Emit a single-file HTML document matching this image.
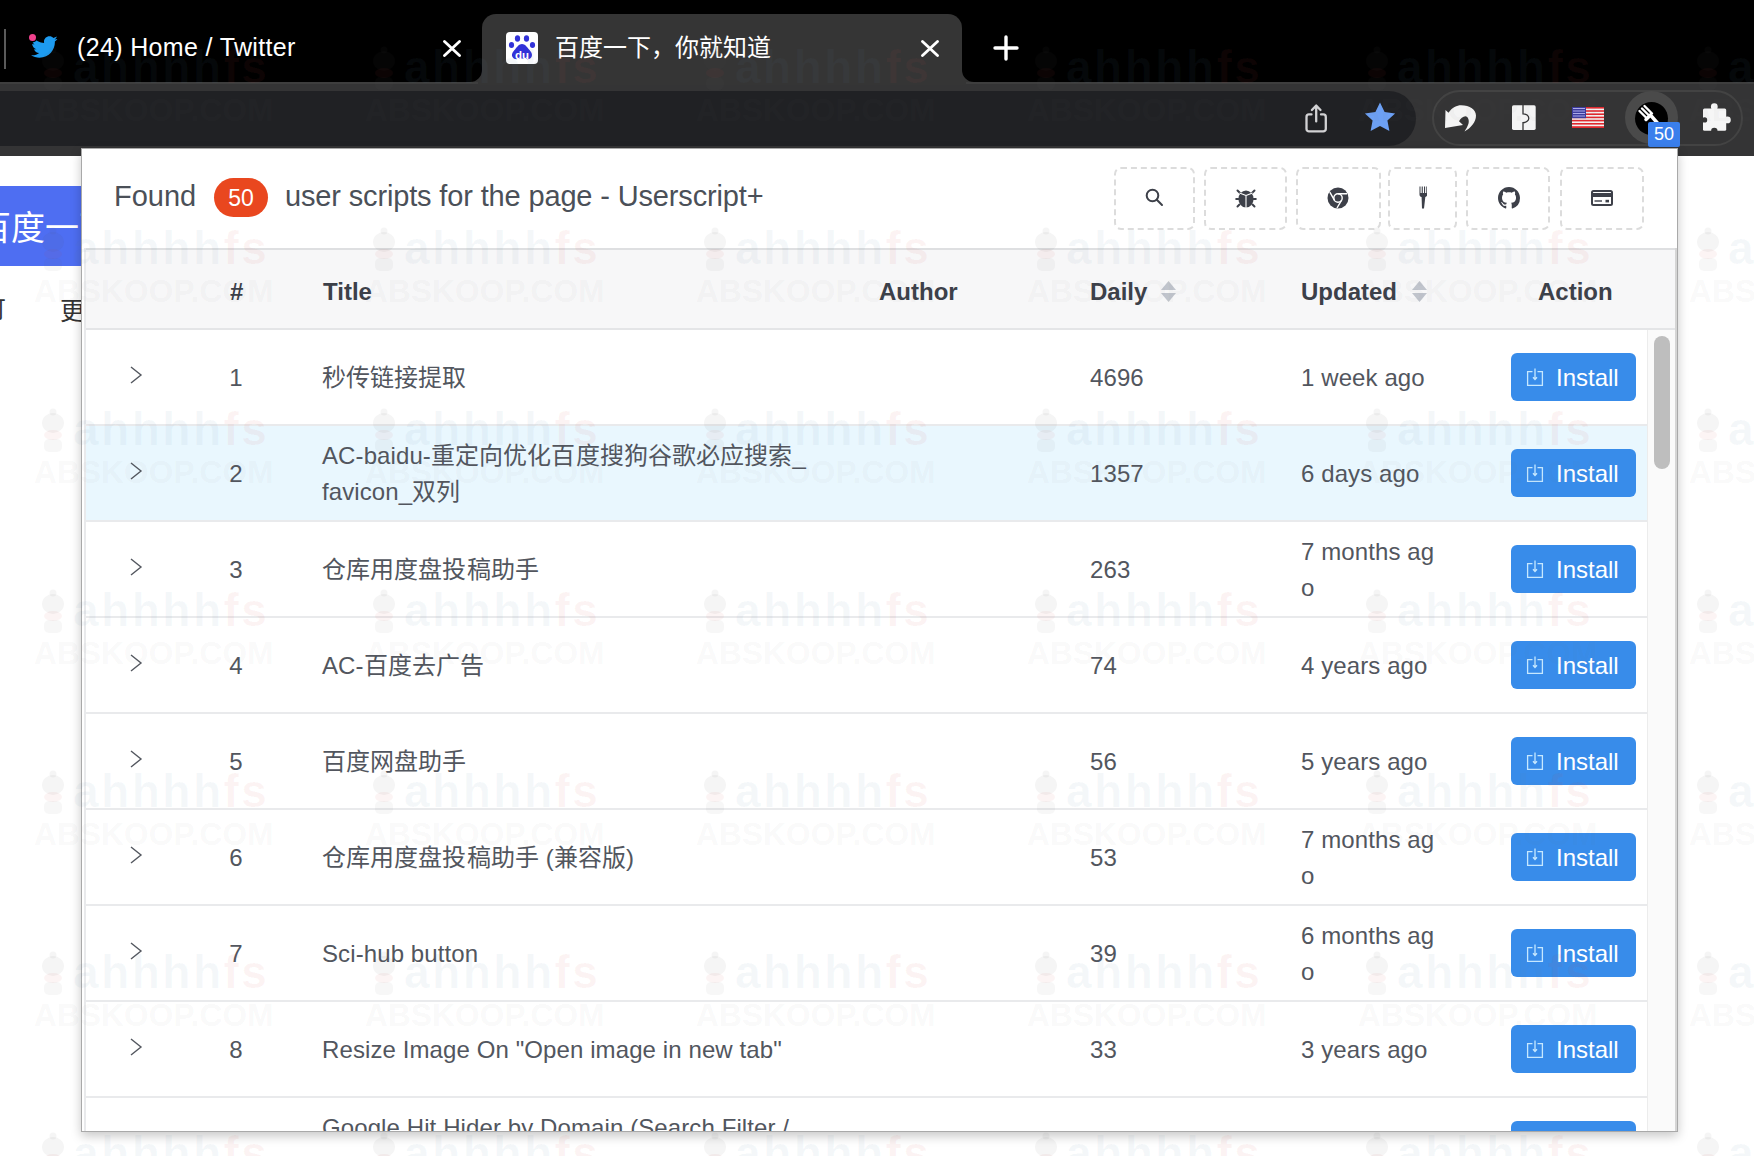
<!DOCTYPE html>
<html lang="zh-CN"><head><meta charset="utf-8">
<style>
*{box-sizing:border-box;margin:0;padding:0}
html,body{width:1754px;height:1156px;overflow:hidden;background:#fff;font-family:"Liberation Sans",sans-serif;position:relative}
.abs{position:absolute}
svg{display:block}
.tabtxt{position:absolute;color:#fff;font-size:25px;line-height:25px;white-space:nowrap;letter-spacing:0.35px}
.hdr{position:absolute;color:#4b5058;font-size:28px;line-height:28px;white-space:nowrap}
.ibtn{position:absolute;top:167px;height:63px;border:2px dashed #dcdcdc;border-radius:7px}
.ibtn svg{position:absolute}
.th{position:absolute;font-weight:bold;color:#3c4049;font-size:24px;line-height:24px;top:280px;white-space:nowrap}
.row{position:absolute;left:86px;width:1561px;height:96px;border-bottom:2px solid #e9eaec;background:#fff}
.td{position:absolute;color:#52565e;font-size:24px;line-height:36px;white-space:nowrap;letter-spacing:0.1px}
.btn{position:absolute;left:1425px;top:23px;width:125px;height:48px;background:#388cea;border-radius:6px}
.btn span{position:absolute;left:45px;top:13px;line-height:24px;color:#fff;font-size:24px}
.btn svg{position:absolute;left:15px;top:15px}
.sort{position:absolute;top:281px}
.wm{position:absolute;white-space:nowrap;pointer-events:none}
</style></head><body>
<div class="abs" style="left:0;top:0;width:1754px;height:82px;background:#000"></div>
<div class="abs" style="left:4px;top:29px;width:2px;height:40px;background:#5a5a5a"></div>
<svg class="abs" style="left:29.6px;top:32.5px" width="28" height="28" viewBox="0 0 24 24"><path fill="#1d9bf0" d="M23.643 4.937c-.835.37-1.732.62-2.675.733.962-.576 1.7-1.49 2.048-2.578-.9.534-1.897.922-2.958 1.13-.85-.904-2.06-1.470-3.400-1.470-2.572 0-4.658 2.086-4.658 4.660 0 .364.042.718.12 1.060-3.873-.195-7.304-2.050-9.602-4.868-.4.690-.63 1.490-.63 2.342 0 1.616.823 3.043 2.072 3.878-.764-.025-1.482-.234-2.110-.583v.060c0 2.257 1.605 4.140 3.737 4.568-.392.106-.803.162-1.227.162-.3 0-.593-.028-.877-.082.593 1.850 2.313 3.198 4.352 3.234-1.595 1.250-3.604 1.995-5.786 1.995-.376 0-.747-.022-1.112-.065 2.062 1.323 4.510 2.093 7.140 2.093 8.570 0 13.255-7.098 13.255-13.254 0-.2-.005-.402-.014-.602.910-.658 1.700-1.477 2.323-2.410z"/></svg>
<div class="abs" style="left:29px;top:33.5px;width:7px;height:7px;border-radius:50%;background:#f0418c;box-shadow:0 0 0 1.5px #000"></div>
<div class="tabtxt" style="left:77px;top:35px">(24) Home / Twitter</div>
<svg class="abs" style="left:443px;top:40px" width="18" height="17" viewBox="0 0 18 17"><path d="M1.5 1.5L16.5 15.5M16.5 1.5L1.5 15.5" stroke="#fff" stroke-width="2.8" stroke-linecap="round"/></svg>
<div class="abs" style="left:482px;top:14px;width:480px;height:76px;background:#353535;border-radius:14px 14px 0 0"></div>
<svg class="abs" style="left:470px;top:70px" width="12" height="12" viewBox="0 0 12 12"><path d="M0 12 L12 12 L12 0 A12 12 0 0 1 0 12Z" fill="#353535"/></svg>
<svg class="abs" style="left:962px;top:70px" width="12" height="12" viewBox="0 0 12 12"><path d="M12 12 L0 12 L0 0 A12 12 0 0 0 12 12Z" fill="#353535"/></svg>
<div class="abs" style="left:506px;top:32px;width:32px;height:32px;background:#fff;border-radius:4px"></div>
<svg class="abs" style="left:506px;top:32px" width="32" height="32" viewBox="0 0 32 32">
<g fill="#3232d8"><ellipse cx="11.5" cy="6.5" rx="2.6" ry="3.2"/><ellipse cx="20.5" cy="6.5" rx="2.6" ry="3.2"/><ellipse cx="5.5" cy="13" rx="2.6" ry="3"/><ellipse cx="26.5" cy="13" rx="2.6" ry="3"/>
<path d="M16 12c-3 0-5 3-7 5.5-2 2.3-4 4.5-2.5 7.5 1.2 2.3 3.5 2.3 5.5 2 1.4-.2 2.6-.5 4-.5s2.6.3 4 .5c2 .3 4.3.3 5.5-2 1.5-3-.5-5.2-2.5-7.5C21 15 19 12 16 12z"/></g>
<text x="16" y="26.5" font-family="Liberation Sans" font-weight="bold" font-size="11.5" fill="#fff" text-anchor="middle">du</text>
</svg>
<div class="tabtxt" style="left:555px;top:35px;font-size:24px;letter-spacing:0;font-weight:500">百度一下，你就知道</div>
<svg class="abs" style="left:921px;top:40px" width="18" height="17" viewBox="0 0 18 17"><path d="M1.5 1.5L16.5 15.5M16.5 1.5L1.5 15.5" stroke="#fff" stroke-width="2.8" stroke-linecap="round"/></svg>
<svg class="abs" style="left:993px;top:35px" width="26" height="26" viewBox="0 0 26 26"><path d="M13 2V24M2 13H24" stroke="#fff" stroke-width="3.4" stroke-linecap="round"/></svg>

<div class="abs" style="left:0;top:82px;width:1754px;height:74px;background:#343435"></div>
<div class="abs" style="left:0;top:82px;width:1754px;height:2px;background:#3e3e3e"></div>
<div class="abs" style="left:478px;top:82px;width:488px;height:3px;background:#353535"></div>
<div class="abs" style="left:-40px;top:91px;width:1456px;height:55px;background:#202124;border-radius:28px"></div>
<div class="abs" style="left:1432px;top:90px;width:311px;height:56px;border:2px solid #434343;border-radius:28px"></div>

<svg class="abs" style="left:1303px;top:102px" width="28" height="32" viewBox="0 0 28 32" fill="none" stroke="#d2d2d4" stroke-width="2.3" stroke-linecap="round" stroke-linejoin="round"><path d="M8.500 12.400H6a2.500 2.500 0 0 0-2.500 2.500V26.900a2.500 2.500 0 0 0 2.500 2.500H20.300a2.500 2.500 0 0 0 2.500-2.500V14.900a2.500 2.500 0 0 0-2.500-2.500H18"/><path d="M13.200 19.400V3.600M8.900 8L13.200 3.600L17.500 8"/></svg>
<svg class="abs" style="left:1363px;top:101px" width="34" height="33" viewBox="0 0 34 33"><path fill="#6ca0f4" d="M17 1.5l4.6 9.6 10.5 1.3-7.7 7.2 2 10.4L17 24.9 7.6 30l2-10.4L1.9 12.4l10.5-1.3z"/></svg>
<svg class="abs" style="left:1440px;top:100px" width="40" height="35" viewBox="0 0 40 35"><path fill="#f4f4f4" d="M5.500 10L8.500 12.800C12 7.500 17 5.300 21 5.300C30 5.300 36 10 36 15.500C36 22 31 28 24.500 31.400C27.500 27 29.500 23 28.500 19.500C28 17 26.500 16.300 25.500 16.300C23 16.300 20.500 18.500 19 21.300L23 25L5 28Z"/></svg>
<svg class="abs" style="left:1510px;top:104px" width="28" height="28" viewBox="0 0 28 28"><rect x="2" y="1.300" width="23.700" height="24.600" rx="1.600" fill="#f4f4f4"/><path d="M13 1V9.800A5.800 4.400 0 0 1 13 18.600V26.500" fill="none" stroke="#343435" stroke-width="1.300"/></svg>
<svg class="abs" style="left:1572px;top:107px" width="32" height="21" viewBox="0 0 32 21">
<rect width="32" height="21" fill="#f2f2f2"/>
<g fill="#e0282e"><rect y="0" width="32" height="1.6"/><rect y="3.2" width="32" height="1.6"/><rect y="6.4" width="32" height="1.6"/><rect y="9.6" width="32" height="1.6"/><rect y="12.8" width="32" height="1.6"/><rect y="16" width="32" height="1.6"/><rect y="19.2" width="32" height="1.8"/></g>
<rect width="14" height="11.2" fill="#3c3b9e"/>
<g fill="#c8c8ff" opacity=".8"><rect x="1" y="1" width="12" height="1"/><rect x="1" y="3.5" width="12" height="1"/><rect x="1" y="6" width="12" height="1"/><rect x="1" y="8.5" width="12" height="1"/></g>
</svg>
<div class="abs" style="left:1625px;top:91px;width:53px;height:53px;border-radius:50%;background:#4a4a4a"></div>
<div class="abs" style="left:1635px;top:102px;width:33px;height:33px;border-radius:50%;background:#000"></div>
<svg class="abs" style="left:1635px;top:102px" width="33" height="33" viewBox="0 0 33 33" fill="none" stroke="#fff" stroke-width="2.4" stroke-linecap="round">
<path d="M7 6.5L14.5 14M4.5 9L12 16.5M9.5 4L17 11.5"/><path d="M11 17.5L15.5 13L25 24" stroke-width="3.5"/></svg>
<div class="abs" style="left:1648px;top:122px;width:32px;height:25px;background:#3a7fec;border-radius:2px;color:#fff;font-size:18px;line-height:25px;text-align:center">50</div>
<svg class="abs" style="left:1700px;top:100px" width="34" height="34" viewBox="0 0 34 34"><g fill="#f6f6f6"><rect x="3" y="8.600" width="23.200" height="22.200" rx="1.500"/><circle cx="14.300" cy="6.700" r="3.400"/><rect x="12" y="6.700" width="4.600" height="4"/><circle cx="27.400" cy="19.900" r="3.400"/><rect x="24" y="17.600" width="3.400" height="4.600"/></g><g fill="#343435"><circle cx="4.600" cy="19.900" r="2.600"/><circle cx="14.300" cy="31" r="3.200"/></g></svg>


<div class="abs" style="left:0;top:156px;width:1754px;height:1000px;background:#fff"></div>

<div class="abs" style="left:0;top:186px;width:84px;height:80px;background:#4e6ef2;overflow:hidden">
<div class="abs" style="left:-23px;top:22px;color:#fff;font-size:34px;line-height:40px;white-space:nowrap;font-weight:500">百度一下</div></div>
<div class="abs" style="left:-18px;top:296px;color:#333;font-size:24px;line-height:28px;white-space:nowrap">可</div>
<div class="abs" style="left:60px;top:297px;color:#333;font-size:25px;line-height:28px;white-space:nowrap">更</div>


<div class="abs" style="left:81px;top:148px;width:1597px;height:984px;background:#fff;border:1px solid #a9a9a9;box-shadow:0 4px 10px rgba(0,0,0,.22);overflow:hidden">
<div class="abs" style="left:-82px;top:-149px;width:1754px;height:1156px">
<div class="hdr" style="left:114px;top:182px;font-size:29px;letter-spacing:0px">Found</div>
<div class="abs" style="left:214px;top:178px;width:54px;height:39px;border-radius:20px;background:#e9471f;color:#fff;font-size:23px;line-height:41px;text-align:center">50</div>
<div class="hdr" style="left:285px;top:182px;font-size:29px;letter-spacing:-0.15px">user scripts for the page - Userscript+</div>
<div class="ibtn" style="left:1114px;width:81px"></div>
<div class="abs" style="left:1145px;top:188px"><svg width="20" height="20" viewBox="0 0 20 20" fill="none" stroke="#3d4049" stroke-width="2" stroke-linecap="round"><circle cx="7.5" cy="7.5" r="5.8"/><path d="M11.8 11.8L17 17"/></svg></div>
<div class="ibtn" style="left:1204px;width:83px"></div>
<div class="abs" style="left:1235px;top:187px"><svg width="22" height="22" viewBox="0 0 22 22"><g stroke="#3d4049" stroke-width="2" stroke-linecap="round"><path d="M5 6L2.500 3.500M17 6L19.500 3.500M3.500 12H1.200M18.500 12H20.800M4.500 17.500L2.500 19.500M17.500 17.500L19.500 19.500"/></g><ellipse cx="11" cy="12" rx="7.6" ry="8.6" fill="#3d4049"/><path d="M11 8.500V21M11 8.500L4.500 6M11 8.500L17.500 6" stroke="#fff" stroke-width="1.1" fill="none"/></svg></div>
<div class="ibtn" style="left:1296px;width:85px"></div>
<div class="abs" style="left:1327px;top:187px"><svg width="22" height="22" viewBox="0 0 22 22"><circle cx="11" cy="11" r="10.5" fill="#3d4049"/><circle cx="11" cy="11" r="4.2" fill="none" stroke="#fff" stroke-width="1.4"/><path d="M11 6.8H20.2M7.4 13.1L2.8 5.2M14.6 13.1L10 21" stroke="#fff" stroke-width="1.4"/></svg></div>
<div class="ibtn" style="left:1388px;width:69px"></div>
<div class="abs" style="left:1419px;top:186px"><svg width="8" height="23" viewBox="0 0 8 23"><path fill="#3d4049" d="M0.5 0.5h1v6.5h1.2v-6.5h1.1v6.5h1.2v-6.5h1.1v6.5h1.2v-6.5h1v8c0 1.3-.8 2.2-2 2.6L5 22.5H3L2.6 11.1C1.300 10.700 0.5 9.800 0.5 8.5z"/></svg></div>
<div class="ibtn" style="left:1466px;width:84px"></div>
<div class="abs" style="left:1498px;top:187px"><svg width="22" height="22" viewBox="0 0 16 16"><path fill="#3d4049" d="M8 0C3.58 0 0 3.58 0 8c0 3.54 2.29 6.53 5.47 7.59.4.07.55-.17.55-.38 0-.19-.01-.82-.01-1.49-2.01.37-2.53-.49-2.69-.94-.09-.23-.48-.94-.82-1.13-.28-.15-.68-.52-.01-.53.63-.01 1.08.58 1.23.82.72 1.21 1.87.87 2.33.66.07-.52.28-.87.51-1.07-1.78-.2-3.64-.89-3.64-3.95 0-.87.31-1.59.82-2.15-.08-.2-.36-1.02.08-2.12 0 0 .67-.21 2.2.82.64-.18 1.32-.27 2-.27.68 0 1.36.09 2 .27 1.53-1.04 2.2-.82 2.2-.82.44 1.1.16 1.92.08 2.12.51.56.82 1.27.82 2.15 0 3.07-1.87 3.75-3.65 3.95.29.25.54.73.54 1.48 0 1.07-.01 1.93-.01 2.2 0 .21.15.46.55.38A8.013 8.013 0 0016 8c0-4.42-3.58-8-8-8z"/></svg></div>
<div class="ibtn" style="left:1560px;width:84px"></div>
<div class="abs" style="left:1591px;top:190px"><svg width="22" height="16" viewBox="0 0 22 16"><rect x="1" y="1" width="20" height="14" rx="1.5" fill="none" stroke="#3d4049" stroke-width="2"/><rect x="1" y="3" width="20" height="4" fill="#3d4049"/><path d="M3.500 11H11" stroke="#3d4049" stroke-width="1.4"/><rect x="14.5" y="9.800" width="3.5" height="2.600" fill="#3d4049"/></svg></div>
<div class="abs" style="left:85px;top:248px;width:1592px;height:82px;background:#f7f7f8;border-top:2px solid #dedfe1;border-bottom:2px solid #e4e5e7"></div>
<div class="th" style="left:230px">#</div>
<div class="th" style="left:323px">Title</div>
<div class="th" style="left:879px">Author</div>
<div class="th" style="left:1090px">Daily</div>
<svg class="sort" style="left:1160px" width="17" height="22" viewBox="0 0 17 22"><path d="M8.5 0L16 9H1Z" fill="#c0c4cc"/><path d="M8.5 21L16 12H1Z" fill="#c0c4cc"/></svg>
<div class="th" style="left:1301px">Updated</div>
<svg class="sort" style="left:1411px" width="17" height="22" viewBox="0 0 17 22"><path d="M8.5 0L16 9H1Z" fill="#c0c4cc"/><path d="M8.5 21L16 12H1Z" fill="#c0c4cc"/></svg>
<div class="th" style="left:1538px">Action</div>
<div class="abs" style="left:85px;top:330px;width:1592px;height:802px;overflow:hidden">
<div class="abs" style="left:-85px;top:-330px;width:1754px;height:1156px">
<div class="row" style="top:330px;background:#fff">
<svg class="abs" style="left:43px;top:36px" width="14" height="18" viewBox="0 0 14 18"><path d="M2 1L12 9L2 17" fill="none" stroke="#53575f" stroke-width="1.4"/></svg>
<div class="td" style="left:120px;top:30px;width:60px;text-align:center">1</div>
<div class="td" style="left:236px;top:30.0px">秒传链接提取</div>
<div class="td" style="left:1004px;top:30.0px">4696</div>
<div class="td" style="left:1215px;top:30.0px">1 week ago</div>
<div class="btn"><svg width="18" height="18" viewBox="0 0 18 18" fill="none" stroke="#c6e8ff" stroke-width="1.3"><path d="M6.500 3.700H1.600V17.300H16.400V3.700H11.500"/><path d="M9 0.500V11.500M7 9.300L9 11.500L11 9.300"/></svg><span>Install</span></div>
</div>
<div class="row" style="top:426px;background:#e9f7fe">
<svg class="abs" style="left:43px;top:36px" width="14" height="18" viewBox="0 0 14 18"><path d="M2 1L12 9L2 17" fill="none" stroke="#53575f" stroke-width="1.4"/></svg>
<div class="td" style="left:120px;top:30px;width:60px;text-align:center">2</div>
<div class="td" style="left:236px;top:12.0px">AC-baidu-重定向优化百度搜狗谷歌必应搜索_<br>favicon_双列</div>
<div class="td" style="left:1004px;top:30.0px">1357</div>
<div class="td" style="left:1215px;top:30.0px">6 days ago</div>
<div class="btn"><svg width="18" height="18" viewBox="0 0 18 18" fill="none" stroke="#c6e8ff" stroke-width="1.3"><path d="M6.500 3.700H1.600V17.300H16.400V3.700H11.500"/><path d="M9 0.500V11.500M7 9.300L9 11.500L11 9.300"/></svg><span>Install</span></div>
</div>
<div class="row" style="top:522px;background:#fff">
<svg class="abs" style="left:43px;top:36px" width="14" height="18" viewBox="0 0 14 18"><path d="M2 1L12 9L2 17" fill="none" stroke="#53575f" stroke-width="1.4"/></svg>
<div class="td" style="left:120px;top:30px;width:60px;text-align:center">3</div>
<div class="td" style="left:236px;top:30.0px">仓库用度盘投稿助手</div>
<div class="td" style="left:1004px;top:30.0px">263</div>
<div class="td" style="left:1215px;top:12.0px">7 months ag<br>o</div>
<div class="btn"><svg width="18" height="18" viewBox="0 0 18 18" fill="none" stroke="#c6e8ff" stroke-width="1.3"><path d="M6.500 3.700H1.600V17.300H16.400V3.700H11.500"/><path d="M9 0.500V11.500M7 9.300L9 11.500L11 9.300"/></svg><span>Install</span></div>
</div>
<div class="row" style="top:618px;background:#fff">
<svg class="abs" style="left:43px;top:36px" width="14" height="18" viewBox="0 0 14 18"><path d="M2 1L12 9L2 17" fill="none" stroke="#53575f" stroke-width="1.4"/></svg>
<div class="td" style="left:120px;top:30px;width:60px;text-align:center">4</div>
<div class="td" style="left:236px;top:30.0px">AC-百度去广告</div>
<div class="td" style="left:1004px;top:30.0px">74</div>
<div class="td" style="left:1215px;top:30.0px">4 years ago</div>
<div class="btn"><svg width="18" height="18" viewBox="0 0 18 18" fill="none" stroke="#c6e8ff" stroke-width="1.3"><path d="M6.500 3.700H1.600V17.300H16.400V3.700H11.500"/><path d="M9 0.500V11.500M7 9.300L9 11.500L11 9.300"/></svg><span>Install</span></div>
</div>
<div class="row" style="top:714px;background:#fff">
<svg class="abs" style="left:43px;top:36px" width="14" height="18" viewBox="0 0 14 18"><path d="M2 1L12 9L2 17" fill="none" stroke="#53575f" stroke-width="1.4"/></svg>
<div class="td" style="left:120px;top:30px;width:60px;text-align:center">5</div>
<div class="td" style="left:236px;top:30.0px">百度网盘助手</div>
<div class="td" style="left:1004px;top:30.0px">56</div>
<div class="td" style="left:1215px;top:30.0px">5 years ago</div>
<div class="btn"><svg width="18" height="18" viewBox="0 0 18 18" fill="none" stroke="#c6e8ff" stroke-width="1.3"><path d="M6.500 3.700H1.600V17.300H16.400V3.700H11.500"/><path d="M9 0.500V11.500M7 9.300L9 11.500L11 9.300"/></svg><span>Install</span></div>
</div>
<div class="row" style="top:810px;background:#fff">
<svg class="abs" style="left:43px;top:36px" width="14" height="18" viewBox="0 0 14 18"><path d="M2 1L12 9L2 17" fill="none" stroke="#53575f" stroke-width="1.4"/></svg>
<div class="td" style="left:120px;top:30px;width:60px;text-align:center">6</div>
<div class="td" style="left:236px;top:30.0px">仓库用度盘投稿助手 (兼容版)</div>
<div class="td" style="left:1004px;top:30.0px">53</div>
<div class="td" style="left:1215px;top:12.0px">7 months ag<br>o</div>
<div class="btn"><svg width="18" height="18" viewBox="0 0 18 18" fill="none" stroke="#c6e8ff" stroke-width="1.3"><path d="M6.500 3.700H1.600V17.300H16.400V3.700H11.500"/><path d="M9 0.500V11.500M7 9.300L9 11.500L11 9.300"/></svg><span>Install</span></div>
</div>
<div class="row" style="top:906px;background:#fff">
<svg class="abs" style="left:43px;top:36px" width="14" height="18" viewBox="0 0 14 18"><path d="M2 1L12 9L2 17" fill="none" stroke="#53575f" stroke-width="1.4"/></svg>
<div class="td" style="left:120px;top:30px;width:60px;text-align:center">7</div>
<div class="td" style="left:236px;top:30.0px">Sci-hub button</div>
<div class="td" style="left:1004px;top:30.0px">39</div>
<div class="td" style="left:1215px;top:12.0px">6 months ag<br>o</div>
<div class="btn"><svg width="18" height="18" viewBox="0 0 18 18" fill="none" stroke="#c6e8ff" stroke-width="1.3"><path d="M6.500 3.700H1.600V17.300H16.400V3.700H11.500"/><path d="M9 0.500V11.500M7 9.300L9 11.500L11 9.300"/></svg><span>Install</span></div>
</div>
<div class="row" style="top:1002px;background:#fff">
<svg class="abs" style="left:43px;top:36px" width="14" height="18" viewBox="0 0 14 18"><path d="M2 1L12 9L2 17" fill="none" stroke="#53575f" stroke-width="1.4"/></svg>
<div class="td" style="left:120px;top:30px;width:60px;text-align:center">8</div>
<div class="td" style="left:236px;top:30.0px">Resize Image On &quot;Open image in new tab&quot;</div>
<div class="td" style="left:1004px;top:30.0px">33</div>
<div class="td" style="left:1215px;top:30.0px">3 years ago</div>
<div class="btn"><svg width="18" height="18" viewBox="0 0 18 18" fill="none" stroke="#c6e8ff" stroke-width="1.3"><path d="M6.500 3.700H1.600V17.300H16.400V3.700H11.500"/><path d="M9 0.500V11.500M7 9.300L9 11.500L11 9.300"/></svg><span>Install</span></div>
</div>
<div class="row" style="top:1098px;background:#fff">
<svg class="abs" style="left:43px;top:36px" width="14" height="18" viewBox="0 0 14 18"><path d="M2 1L12 9L2 17" fill="none" stroke="#53575f" stroke-width="1.4"/></svg>
<div class="td" style="left:120px;top:30px;width:60px;text-align:center">9</div>
<div class="td" style="left:236px;top:12.0px">Google Hit Hider by Domain (Search Filter /<br>Block Sites)</div>
<div class="td" style="left:1004px;top:30.0px">30</div>
<div class="td" style="left:1215px;top:30.0px">2 years ago</div>
<div class="btn"><svg width="18" height="18" viewBox="0 0 18 18" fill="none" stroke="#c6e8ff" stroke-width="1.3"><path d="M6.500 3.700H1.600V17.300H16.400V3.700H11.500"/><path d="M9 0.500V11.500M7 9.300L9 11.500L11 9.300"/></svg><span>Install</span></div>
</div>
</div></div>
<div class="abs" style="left:84px;top:248px;width:2px;height:884px;background:#e9eaec"></div>
<div class="abs" style="left:1647px;top:330px;width:29px;height:802px;background:#fafafa;border-left:1px solid #ececec"></div>
<div class="abs" style="left:1654px;top:336px;width:16px;height:133px;border-radius:8px;background:#bebebe"></div>
<div class="abs" style="left:1675px;top:248px;width:2px;height:884px;background:#d5d5d5"></div>
</div>
</div>
<div class="abs" style="left:0;top:0;width:1754px;height:1156px;overflow:hidden;pointer-events:none">
<div class="wm" style="left:-297px;top:-86.2px;font-weight:bold;font-size:31.5px;line-height:31.5px;color:rgba(110,110,110,0.055);letter-spacing:0.2px">ABSKOOP.COM</div>
<div class="wm" style="left:-258px;top:-137.2px;font-weight:bold;font-size:46px;line-height:46px;letter-spacing:2.5px;color:rgba(90,130,160,0.06)">ahhhh<span style="color:rgba(210,70,70,0.06)">fs</span></div>
<svg class="wm" style="left:-291px;top:-135.2px" width="26" height="45" viewBox="0 0 26 45"><circle cx="13" cy="4" r="3.5" fill="rgba(90,90,90,0.06)"/><ellipse cx="13" cy="15" rx="11" ry="10" fill="rgba(90,90,90,0.06)"/><ellipse cx="13" cy="27" rx="9" ry="5" fill="rgba(210,70,70,0.06)"/><rect x="4" y="31" width="18" height="13" rx="5" fill="rgba(90,90,90,0.05)"/></svg>
<div class="wm" style="left:34px;top:-86.2px;font-weight:bold;font-size:31.5px;line-height:31.5px;color:rgba(110,110,110,0.055);letter-spacing:0.2px">ABSKOOP.COM</div>
<div class="wm" style="left:73px;top:-137.2px;font-weight:bold;font-size:46px;line-height:46px;letter-spacing:2.5px;color:rgba(90,130,160,0.06)">ahhhh<span style="color:rgba(210,70,70,0.06)">fs</span></div>
<svg class="wm" style="left:40px;top:-135.2px" width="26" height="45" viewBox="0 0 26 45"><circle cx="13" cy="4" r="3.5" fill="rgba(90,90,90,0.06)"/><ellipse cx="13" cy="15" rx="11" ry="10" fill="rgba(90,90,90,0.06)"/><ellipse cx="13" cy="27" rx="9" ry="5" fill="rgba(210,70,70,0.06)"/><rect x="4" y="31" width="18" height="13" rx="5" fill="rgba(90,90,90,0.05)"/></svg>
<div class="wm" style="left:365px;top:-86.2px;font-weight:bold;font-size:31.5px;line-height:31.5px;color:rgba(110,110,110,0.055);letter-spacing:0.2px">ABSKOOP.COM</div>
<div class="wm" style="left:404px;top:-137.2px;font-weight:bold;font-size:46px;line-height:46px;letter-spacing:2.5px;color:rgba(90,130,160,0.06)">ahhhh<span style="color:rgba(210,70,70,0.06)">fs</span></div>
<svg class="wm" style="left:371px;top:-135.2px" width="26" height="45" viewBox="0 0 26 45"><circle cx="13" cy="4" r="3.5" fill="rgba(90,90,90,0.06)"/><ellipse cx="13" cy="15" rx="11" ry="10" fill="rgba(90,90,90,0.06)"/><ellipse cx="13" cy="27" rx="9" ry="5" fill="rgba(210,70,70,0.06)"/><rect x="4" y="31" width="18" height="13" rx="5" fill="rgba(90,90,90,0.05)"/></svg>
<div class="wm" style="left:696px;top:-86.2px;font-weight:bold;font-size:31.5px;line-height:31.5px;color:rgba(110,110,110,0.055);letter-spacing:0.2px">ABSKOOP.COM</div>
<div class="wm" style="left:735px;top:-137.2px;font-weight:bold;font-size:46px;line-height:46px;letter-spacing:2.5px;color:rgba(90,130,160,0.06)">ahhhh<span style="color:rgba(210,70,70,0.06)">fs</span></div>
<svg class="wm" style="left:702px;top:-135.2px" width="26" height="45" viewBox="0 0 26 45"><circle cx="13" cy="4" r="3.5" fill="rgba(90,90,90,0.06)"/><ellipse cx="13" cy="15" rx="11" ry="10" fill="rgba(90,90,90,0.06)"/><ellipse cx="13" cy="27" rx="9" ry="5" fill="rgba(210,70,70,0.06)"/><rect x="4" y="31" width="18" height="13" rx="5" fill="rgba(90,90,90,0.05)"/></svg>
<div class="wm" style="left:1027px;top:-86.2px;font-weight:bold;font-size:31.5px;line-height:31.5px;color:rgba(110,110,110,0.055);letter-spacing:0.2px">ABSKOOP.COM</div>
<div class="wm" style="left:1066px;top:-137.2px;font-weight:bold;font-size:46px;line-height:46px;letter-spacing:2.5px;color:rgba(90,130,160,0.06)">ahhhh<span style="color:rgba(210,70,70,0.06)">fs</span></div>
<svg class="wm" style="left:1033px;top:-135.2px" width="26" height="45" viewBox="0 0 26 45"><circle cx="13" cy="4" r="3.5" fill="rgba(90,90,90,0.06)"/><ellipse cx="13" cy="15" rx="11" ry="10" fill="rgba(90,90,90,0.06)"/><ellipse cx="13" cy="27" rx="9" ry="5" fill="rgba(210,70,70,0.06)"/><rect x="4" y="31" width="18" height="13" rx="5" fill="rgba(90,90,90,0.05)"/></svg>
<div class="wm" style="left:1358px;top:-86.2px;font-weight:bold;font-size:31.5px;line-height:31.5px;color:rgba(110,110,110,0.055);letter-spacing:0.2px">ABSKOOP.COM</div>
<div class="wm" style="left:1397px;top:-137.2px;font-weight:bold;font-size:46px;line-height:46px;letter-spacing:2.5px;color:rgba(90,130,160,0.06)">ahhhh<span style="color:rgba(210,70,70,0.06)">fs</span></div>
<svg class="wm" style="left:1364px;top:-135.2px" width="26" height="45" viewBox="0 0 26 45"><circle cx="13" cy="4" r="3.5" fill="rgba(90,90,90,0.06)"/><ellipse cx="13" cy="15" rx="11" ry="10" fill="rgba(90,90,90,0.06)"/><ellipse cx="13" cy="27" rx="9" ry="5" fill="rgba(210,70,70,0.06)"/><rect x="4" y="31" width="18" height="13" rx="5" fill="rgba(90,90,90,0.05)"/></svg>
<div class="wm" style="left:1689px;top:-86.2px;font-weight:bold;font-size:31.5px;line-height:31.5px;color:rgba(110,110,110,0.055);letter-spacing:0.2px">ABSKOOP.COM</div>
<div class="wm" style="left:1728px;top:-137.2px;font-weight:bold;font-size:46px;line-height:46px;letter-spacing:2.5px;color:rgba(90,130,160,0.06)">ahhhh<span style="color:rgba(210,70,70,0.06)">fs</span></div>
<svg class="wm" style="left:1695px;top:-135.2px" width="26" height="45" viewBox="0 0 26 45"><circle cx="13" cy="4" r="3.5" fill="rgba(90,90,90,0.06)"/><ellipse cx="13" cy="15" rx="11" ry="10" fill="rgba(90,90,90,0.06)"/><ellipse cx="13" cy="27" rx="9" ry="5" fill="rgba(210,70,70,0.06)"/><rect x="4" y="31" width="18" height="13" rx="5" fill="rgba(90,90,90,0.05)"/></svg>
<div class="wm" style="left:-297px;top:94.8px;font-weight:bold;font-size:31.5px;line-height:31.5px;color:rgba(110,110,110,0.055);letter-spacing:0.2px">ABSKOOP.COM</div>
<div class="wm" style="left:-258px;top:43.8px;font-weight:bold;font-size:46px;line-height:46px;letter-spacing:2.5px;color:rgba(90,130,160,0.06)">ahhhh<span style="color:rgba(210,70,70,0.06)">fs</span></div>
<svg class="wm" style="left:-291px;top:45.8px" width="26" height="45" viewBox="0 0 26 45"><circle cx="13" cy="4" r="3.5" fill="rgba(90,90,90,0.06)"/><ellipse cx="13" cy="15" rx="11" ry="10" fill="rgba(90,90,90,0.06)"/><ellipse cx="13" cy="27" rx="9" ry="5" fill="rgba(210,70,70,0.06)"/><rect x="4" y="31" width="18" height="13" rx="5" fill="rgba(90,90,90,0.05)"/></svg>
<div class="wm" style="left:34px;top:94.8px;font-weight:bold;font-size:31.5px;line-height:31.5px;color:rgba(110,110,110,0.055);letter-spacing:0.2px">ABSKOOP.COM</div>
<div class="wm" style="left:73px;top:43.8px;font-weight:bold;font-size:46px;line-height:46px;letter-spacing:2.5px;color:rgba(90,130,160,0.06)">ahhhh<span style="color:rgba(210,70,70,0.06)">fs</span></div>
<svg class="wm" style="left:40px;top:45.8px" width="26" height="45" viewBox="0 0 26 45"><circle cx="13" cy="4" r="3.5" fill="rgba(90,90,90,0.06)"/><ellipse cx="13" cy="15" rx="11" ry="10" fill="rgba(90,90,90,0.06)"/><ellipse cx="13" cy="27" rx="9" ry="5" fill="rgba(210,70,70,0.06)"/><rect x="4" y="31" width="18" height="13" rx="5" fill="rgba(90,90,90,0.05)"/></svg>
<div class="wm" style="left:365px;top:94.8px;font-weight:bold;font-size:31.5px;line-height:31.5px;color:rgba(110,110,110,0.055);letter-spacing:0.2px">ABSKOOP.COM</div>
<div class="wm" style="left:404px;top:43.8px;font-weight:bold;font-size:46px;line-height:46px;letter-spacing:2.5px;color:rgba(90,130,160,0.06)">ahhhh<span style="color:rgba(210,70,70,0.06)">fs</span></div>
<svg class="wm" style="left:371px;top:45.8px" width="26" height="45" viewBox="0 0 26 45"><circle cx="13" cy="4" r="3.5" fill="rgba(90,90,90,0.06)"/><ellipse cx="13" cy="15" rx="11" ry="10" fill="rgba(90,90,90,0.06)"/><ellipse cx="13" cy="27" rx="9" ry="5" fill="rgba(210,70,70,0.06)"/><rect x="4" y="31" width="18" height="13" rx="5" fill="rgba(90,90,90,0.05)"/></svg>
<div class="wm" style="left:696px;top:94.8px;font-weight:bold;font-size:31.5px;line-height:31.5px;color:rgba(110,110,110,0.055);letter-spacing:0.2px">ABSKOOP.COM</div>
<div class="wm" style="left:735px;top:43.8px;font-weight:bold;font-size:46px;line-height:46px;letter-spacing:2.5px;color:rgba(90,130,160,0.06)">ahhhh<span style="color:rgba(210,70,70,0.06)">fs</span></div>
<svg class="wm" style="left:702px;top:45.8px" width="26" height="45" viewBox="0 0 26 45"><circle cx="13" cy="4" r="3.5" fill="rgba(90,90,90,0.06)"/><ellipse cx="13" cy="15" rx="11" ry="10" fill="rgba(90,90,90,0.06)"/><ellipse cx="13" cy="27" rx="9" ry="5" fill="rgba(210,70,70,0.06)"/><rect x="4" y="31" width="18" height="13" rx="5" fill="rgba(90,90,90,0.05)"/></svg>
<div class="wm" style="left:1027px;top:94.8px;font-weight:bold;font-size:31.5px;line-height:31.5px;color:rgba(110,110,110,0.055);letter-spacing:0.2px">ABSKOOP.COM</div>
<div class="wm" style="left:1066px;top:43.8px;font-weight:bold;font-size:46px;line-height:46px;letter-spacing:2.5px;color:rgba(90,130,160,0.06)">ahhhh<span style="color:rgba(210,70,70,0.06)">fs</span></div>
<svg class="wm" style="left:1033px;top:45.8px" width="26" height="45" viewBox="0 0 26 45"><circle cx="13" cy="4" r="3.5" fill="rgba(90,90,90,0.06)"/><ellipse cx="13" cy="15" rx="11" ry="10" fill="rgba(90,90,90,0.06)"/><ellipse cx="13" cy="27" rx="9" ry="5" fill="rgba(210,70,70,0.06)"/><rect x="4" y="31" width="18" height="13" rx="5" fill="rgba(90,90,90,0.05)"/></svg>
<div class="wm" style="left:1358px;top:94.8px;font-weight:bold;font-size:31.5px;line-height:31.5px;color:rgba(110,110,110,0.055);letter-spacing:0.2px">ABSKOOP.COM</div>
<div class="wm" style="left:1397px;top:43.8px;font-weight:bold;font-size:46px;line-height:46px;letter-spacing:2.5px;color:rgba(90,130,160,0.06)">ahhhh<span style="color:rgba(210,70,70,0.06)">fs</span></div>
<svg class="wm" style="left:1364px;top:45.8px" width="26" height="45" viewBox="0 0 26 45"><circle cx="13" cy="4" r="3.5" fill="rgba(90,90,90,0.06)"/><ellipse cx="13" cy="15" rx="11" ry="10" fill="rgba(90,90,90,0.06)"/><ellipse cx="13" cy="27" rx="9" ry="5" fill="rgba(210,70,70,0.06)"/><rect x="4" y="31" width="18" height="13" rx="5" fill="rgba(90,90,90,0.05)"/></svg>
<div class="wm" style="left:1689px;top:94.8px;font-weight:bold;font-size:31.5px;line-height:31.5px;color:rgba(110,110,110,0.055);letter-spacing:0.2px">ABSKOOP.COM</div>
<div class="wm" style="left:1728px;top:43.8px;font-weight:bold;font-size:46px;line-height:46px;letter-spacing:2.5px;color:rgba(90,130,160,0.06)">ahhhh<span style="color:rgba(210,70,70,0.06)">fs</span></div>
<svg class="wm" style="left:1695px;top:45.8px" width="26" height="45" viewBox="0 0 26 45"><circle cx="13" cy="4" r="3.5" fill="rgba(90,90,90,0.06)"/><ellipse cx="13" cy="15" rx="11" ry="10" fill="rgba(90,90,90,0.06)"/><ellipse cx="13" cy="27" rx="9" ry="5" fill="rgba(210,70,70,0.06)"/><rect x="4" y="31" width="18" height="13" rx="5" fill="rgba(90,90,90,0.05)"/></svg>
<div class="wm" style="left:-297px;top:275.8px;font-weight:bold;font-size:31.5px;line-height:31.5px;color:rgba(110,110,110,0.055);letter-spacing:0.2px">ABSKOOP.COM</div>
<div class="wm" style="left:-258px;top:224.8px;font-weight:bold;font-size:46px;line-height:46px;letter-spacing:2.5px;color:rgba(90,130,160,0.06)">ahhhh<span style="color:rgba(210,70,70,0.06)">fs</span></div>
<svg class="wm" style="left:-291px;top:226.8px" width="26" height="45" viewBox="0 0 26 45"><circle cx="13" cy="4" r="3.5" fill="rgba(90,90,90,0.06)"/><ellipse cx="13" cy="15" rx="11" ry="10" fill="rgba(90,90,90,0.06)"/><ellipse cx="13" cy="27" rx="9" ry="5" fill="rgba(210,70,70,0.06)"/><rect x="4" y="31" width="18" height="13" rx="5" fill="rgba(90,90,90,0.05)"/></svg>
<div class="wm" style="left:34px;top:275.8px;font-weight:bold;font-size:31.5px;line-height:31.5px;color:rgba(110,110,110,0.055);letter-spacing:0.2px">ABSKOOP.COM</div>
<div class="wm" style="left:73px;top:224.8px;font-weight:bold;font-size:46px;line-height:46px;letter-spacing:2.5px;color:rgba(90,130,160,0.06)">ahhhh<span style="color:rgba(210,70,70,0.06)">fs</span></div>
<svg class="wm" style="left:40px;top:226.8px" width="26" height="45" viewBox="0 0 26 45"><circle cx="13" cy="4" r="3.5" fill="rgba(90,90,90,0.06)"/><ellipse cx="13" cy="15" rx="11" ry="10" fill="rgba(90,90,90,0.06)"/><ellipse cx="13" cy="27" rx="9" ry="5" fill="rgba(210,70,70,0.06)"/><rect x="4" y="31" width="18" height="13" rx="5" fill="rgba(90,90,90,0.05)"/></svg>
<div class="wm" style="left:365px;top:275.8px;font-weight:bold;font-size:31.5px;line-height:31.5px;color:rgba(110,110,110,0.055);letter-spacing:0.2px">ABSKOOP.COM</div>
<div class="wm" style="left:404px;top:224.8px;font-weight:bold;font-size:46px;line-height:46px;letter-spacing:2.5px;color:rgba(90,130,160,0.06)">ahhhh<span style="color:rgba(210,70,70,0.06)">fs</span></div>
<svg class="wm" style="left:371px;top:226.8px" width="26" height="45" viewBox="0 0 26 45"><circle cx="13" cy="4" r="3.5" fill="rgba(90,90,90,0.06)"/><ellipse cx="13" cy="15" rx="11" ry="10" fill="rgba(90,90,90,0.06)"/><ellipse cx="13" cy="27" rx="9" ry="5" fill="rgba(210,70,70,0.06)"/><rect x="4" y="31" width="18" height="13" rx="5" fill="rgba(90,90,90,0.05)"/></svg>
<div class="wm" style="left:696px;top:275.8px;font-weight:bold;font-size:31.5px;line-height:31.5px;color:rgba(110,110,110,0.055);letter-spacing:0.2px">ABSKOOP.COM</div>
<div class="wm" style="left:735px;top:224.8px;font-weight:bold;font-size:46px;line-height:46px;letter-spacing:2.5px;color:rgba(90,130,160,0.06)">ahhhh<span style="color:rgba(210,70,70,0.06)">fs</span></div>
<svg class="wm" style="left:702px;top:226.8px" width="26" height="45" viewBox="0 0 26 45"><circle cx="13" cy="4" r="3.5" fill="rgba(90,90,90,0.06)"/><ellipse cx="13" cy="15" rx="11" ry="10" fill="rgba(90,90,90,0.06)"/><ellipse cx="13" cy="27" rx="9" ry="5" fill="rgba(210,70,70,0.06)"/><rect x="4" y="31" width="18" height="13" rx="5" fill="rgba(90,90,90,0.05)"/></svg>
<div class="wm" style="left:1027px;top:275.8px;font-weight:bold;font-size:31.5px;line-height:31.5px;color:rgba(110,110,110,0.055);letter-spacing:0.2px">ABSKOOP.COM</div>
<div class="wm" style="left:1066px;top:224.8px;font-weight:bold;font-size:46px;line-height:46px;letter-spacing:2.5px;color:rgba(90,130,160,0.06)">ahhhh<span style="color:rgba(210,70,70,0.06)">fs</span></div>
<svg class="wm" style="left:1033px;top:226.8px" width="26" height="45" viewBox="0 0 26 45"><circle cx="13" cy="4" r="3.5" fill="rgba(90,90,90,0.06)"/><ellipse cx="13" cy="15" rx="11" ry="10" fill="rgba(90,90,90,0.06)"/><ellipse cx="13" cy="27" rx="9" ry="5" fill="rgba(210,70,70,0.06)"/><rect x="4" y="31" width="18" height="13" rx="5" fill="rgba(90,90,90,0.05)"/></svg>
<div class="wm" style="left:1358px;top:275.8px;font-weight:bold;font-size:31.5px;line-height:31.5px;color:rgba(110,110,110,0.055);letter-spacing:0.2px">ABSKOOP.COM</div>
<div class="wm" style="left:1397px;top:224.8px;font-weight:bold;font-size:46px;line-height:46px;letter-spacing:2.5px;color:rgba(90,130,160,0.06)">ahhhh<span style="color:rgba(210,70,70,0.06)">fs</span></div>
<svg class="wm" style="left:1364px;top:226.8px" width="26" height="45" viewBox="0 0 26 45"><circle cx="13" cy="4" r="3.5" fill="rgba(90,90,90,0.06)"/><ellipse cx="13" cy="15" rx="11" ry="10" fill="rgba(90,90,90,0.06)"/><ellipse cx="13" cy="27" rx="9" ry="5" fill="rgba(210,70,70,0.06)"/><rect x="4" y="31" width="18" height="13" rx="5" fill="rgba(90,90,90,0.05)"/></svg>
<div class="wm" style="left:1689px;top:275.8px;font-weight:bold;font-size:31.5px;line-height:31.5px;color:rgba(110,110,110,0.055);letter-spacing:0.2px">ABSKOOP.COM</div>
<div class="wm" style="left:1728px;top:224.8px;font-weight:bold;font-size:46px;line-height:46px;letter-spacing:2.5px;color:rgba(90,130,160,0.06)">ahhhh<span style="color:rgba(210,70,70,0.06)">fs</span></div>
<svg class="wm" style="left:1695px;top:226.8px" width="26" height="45" viewBox="0 0 26 45"><circle cx="13" cy="4" r="3.5" fill="rgba(90,90,90,0.06)"/><ellipse cx="13" cy="15" rx="11" ry="10" fill="rgba(90,90,90,0.06)"/><ellipse cx="13" cy="27" rx="9" ry="5" fill="rgba(210,70,70,0.06)"/><rect x="4" y="31" width="18" height="13" rx="5" fill="rgba(90,90,90,0.05)"/></svg>
<div class="wm" style="left:-297px;top:456.8px;font-weight:bold;font-size:31.5px;line-height:31.5px;color:rgba(110,110,110,0.055);letter-spacing:0.2px">ABSKOOP.COM</div>
<div class="wm" style="left:-258px;top:405.8px;font-weight:bold;font-size:46px;line-height:46px;letter-spacing:2.5px;color:rgba(90,130,160,0.06)">ahhhh<span style="color:rgba(210,70,70,0.06)">fs</span></div>
<svg class="wm" style="left:-291px;top:407.8px" width="26" height="45" viewBox="0 0 26 45"><circle cx="13" cy="4" r="3.5" fill="rgba(90,90,90,0.06)"/><ellipse cx="13" cy="15" rx="11" ry="10" fill="rgba(90,90,90,0.06)"/><ellipse cx="13" cy="27" rx="9" ry="5" fill="rgba(210,70,70,0.06)"/><rect x="4" y="31" width="18" height="13" rx="5" fill="rgba(90,90,90,0.05)"/></svg>
<div class="wm" style="left:34px;top:456.8px;font-weight:bold;font-size:31.5px;line-height:31.5px;color:rgba(110,110,110,0.055);letter-spacing:0.2px">ABSKOOP.COM</div>
<div class="wm" style="left:73px;top:405.8px;font-weight:bold;font-size:46px;line-height:46px;letter-spacing:2.5px;color:rgba(90,130,160,0.06)">ahhhh<span style="color:rgba(210,70,70,0.06)">fs</span></div>
<svg class="wm" style="left:40px;top:407.8px" width="26" height="45" viewBox="0 0 26 45"><circle cx="13" cy="4" r="3.5" fill="rgba(90,90,90,0.06)"/><ellipse cx="13" cy="15" rx="11" ry="10" fill="rgba(90,90,90,0.06)"/><ellipse cx="13" cy="27" rx="9" ry="5" fill="rgba(210,70,70,0.06)"/><rect x="4" y="31" width="18" height="13" rx="5" fill="rgba(90,90,90,0.05)"/></svg>
<div class="wm" style="left:365px;top:456.8px;font-weight:bold;font-size:31.5px;line-height:31.5px;color:rgba(110,110,110,0.055);letter-spacing:0.2px">ABSKOOP.COM</div>
<div class="wm" style="left:404px;top:405.8px;font-weight:bold;font-size:46px;line-height:46px;letter-spacing:2.5px;color:rgba(90,130,160,0.06)">ahhhh<span style="color:rgba(210,70,70,0.06)">fs</span></div>
<svg class="wm" style="left:371px;top:407.8px" width="26" height="45" viewBox="0 0 26 45"><circle cx="13" cy="4" r="3.5" fill="rgba(90,90,90,0.06)"/><ellipse cx="13" cy="15" rx="11" ry="10" fill="rgba(90,90,90,0.06)"/><ellipse cx="13" cy="27" rx="9" ry="5" fill="rgba(210,70,70,0.06)"/><rect x="4" y="31" width="18" height="13" rx="5" fill="rgba(90,90,90,0.05)"/></svg>
<div class="wm" style="left:696px;top:456.8px;font-weight:bold;font-size:31.5px;line-height:31.5px;color:rgba(110,110,110,0.055);letter-spacing:0.2px">ABSKOOP.COM</div>
<div class="wm" style="left:735px;top:405.8px;font-weight:bold;font-size:46px;line-height:46px;letter-spacing:2.5px;color:rgba(90,130,160,0.06)">ahhhh<span style="color:rgba(210,70,70,0.06)">fs</span></div>
<svg class="wm" style="left:702px;top:407.8px" width="26" height="45" viewBox="0 0 26 45"><circle cx="13" cy="4" r="3.5" fill="rgba(90,90,90,0.06)"/><ellipse cx="13" cy="15" rx="11" ry="10" fill="rgba(90,90,90,0.06)"/><ellipse cx="13" cy="27" rx="9" ry="5" fill="rgba(210,70,70,0.06)"/><rect x="4" y="31" width="18" height="13" rx="5" fill="rgba(90,90,90,0.05)"/></svg>
<div class="wm" style="left:1027px;top:456.8px;font-weight:bold;font-size:31.5px;line-height:31.5px;color:rgba(110,110,110,0.055);letter-spacing:0.2px">ABSKOOP.COM</div>
<div class="wm" style="left:1066px;top:405.8px;font-weight:bold;font-size:46px;line-height:46px;letter-spacing:2.5px;color:rgba(90,130,160,0.06)">ahhhh<span style="color:rgba(210,70,70,0.06)">fs</span></div>
<svg class="wm" style="left:1033px;top:407.8px" width="26" height="45" viewBox="0 0 26 45"><circle cx="13" cy="4" r="3.5" fill="rgba(90,90,90,0.06)"/><ellipse cx="13" cy="15" rx="11" ry="10" fill="rgba(90,90,90,0.06)"/><ellipse cx="13" cy="27" rx="9" ry="5" fill="rgba(210,70,70,0.06)"/><rect x="4" y="31" width="18" height="13" rx="5" fill="rgba(90,90,90,0.05)"/></svg>
<div class="wm" style="left:1358px;top:456.8px;font-weight:bold;font-size:31.5px;line-height:31.5px;color:rgba(110,110,110,0.055);letter-spacing:0.2px">ABSKOOP.COM</div>
<div class="wm" style="left:1397px;top:405.8px;font-weight:bold;font-size:46px;line-height:46px;letter-spacing:2.5px;color:rgba(90,130,160,0.06)">ahhhh<span style="color:rgba(210,70,70,0.06)">fs</span></div>
<svg class="wm" style="left:1364px;top:407.8px" width="26" height="45" viewBox="0 0 26 45"><circle cx="13" cy="4" r="3.5" fill="rgba(90,90,90,0.06)"/><ellipse cx="13" cy="15" rx="11" ry="10" fill="rgba(90,90,90,0.06)"/><ellipse cx="13" cy="27" rx="9" ry="5" fill="rgba(210,70,70,0.06)"/><rect x="4" y="31" width="18" height="13" rx="5" fill="rgba(90,90,90,0.05)"/></svg>
<div class="wm" style="left:1689px;top:456.8px;font-weight:bold;font-size:31.5px;line-height:31.5px;color:rgba(110,110,110,0.055);letter-spacing:0.2px">ABSKOOP.COM</div>
<div class="wm" style="left:1728px;top:405.8px;font-weight:bold;font-size:46px;line-height:46px;letter-spacing:2.5px;color:rgba(90,130,160,0.06)">ahhhh<span style="color:rgba(210,70,70,0.06)">fs</span></div>
<svg class="wm" style="left:1695px;top:407.8px" width="26" height="45" viewBox="0 0 26 45"><circle cx="13" cy="4" r="3.5" fill="rgba(90,90,90,0.06)"/><ellipse cx="13" cy="15" rx="11" ry="10" fill="rgba(90,90,90,0.06)"/><ellipse cx="13" cy="27" rx="9" ry="5" fill="rgba(210,70,70,0.06)"/><rect x="4" y="31" width="18" height="13" rx="5" fill="rgba(90,90,90,0.05)"/></svg>
<div class="wm" style="left:-297px;top:637.8px;font-weight:bold;font-size:31.5px;line-height:31.5px;color:rgba(110,110,110,0.055);letter-spacing:0.2px">ABSKOOP.COM</div>
<div class="wm" style="left:-258px;top:586.8px;font-weight:bold;font-size:46px;line-height:46px;letter-spacing:2.5px;color:rgba(90,130,160,0.06)">ahhhh<span style="color:rgba(210,70,70,0.06)">fs</span></div>
<svg class="wm" style="left:-291px;top:588.8px" width="26" height="45" viewBox="0 0 26 45"><circle cx="13" cy="4" r="3.5" fill="rgba(90,90,90,0.06)"/><ellipse cx="13" cy="15" rx="11" ry="10" fill="rgba(90,90,90,0.06)"/><ellipse cx="13" cy="27" rx="9" ry="5" fill="rgba(210,70,70,0.06)"/><rect x="4" y="31" width="18" height="13" rx="5" fill="rgba(90,90,90,0.05)"/></svg>
<div class="wm" style="left:34px;top:637.8px;font-weight:bold;font-size:31.5px;line-height:31.5px;color:rgba(110,110,110,0.055);letter-spacing:0.2px">ABSKOOP.COM</div>
<div class="wm" style="left:73px;top:586.8px;font-weight:bold;font-size:46px;line-height:46px;letter-spacing:2.5px;color:rgba(90,130,160,0.06)">ahhhh<span style="color:rgba(210,70,70,0.06)">fs</span></div>
<svg class="wm" style="left:40px;top:588.8px" width="26" height="45" viewBox="0 0 26 45"><circle cx="13" cy="4" r="3.5" fill="rgba(90,90,90,0.06)"/><ellipse cx="13" cy="15" rx="11" ry="10" fill="rgba(90,90,90,0.06)"/><ellipse cx="13" cy="27" rx="9" ry="5" fill="rgba(210,70,70,0.06)"/><rect x="4" y="31" width="18" height="13" rx="5" fill="rgba(90,90,90,0.05)"/></svg>
<div class="wm" style="left:365px;top:637.8px;font-weight:bold;font-size:31.5px;line-height:31.5px;color:rgba(110,110,110,0.055);letter-spacing:0.2px">ABSKOOP.COM</div>
<div class="wm" style="left:404px;top:586.8px;font-weight:bold;font-size:46px;line-height:46px;letter-spacing:2.5px;color:rgba(90,130,160,0.06)">ahhhh<span style="color:rgba(210,70,70,0.06)">fs</span></div>
<svg class="wm" style="left:371px;top:588.8px" width="26" height="45" viewBox="0 0 26 45"><circle cx="13" cy="4" r="3.5" fill="rgba(90,90,90,0.06)"/><ellipse cx="13" cy="15" rx="11" ry="10" fill="rgba(90,90,90,0.06)"/><ellipse cx="13" cy="27" rx="9" ry="5" fill="rgba(210,70,70,0.06)"/><rect x="4" y="31" width="18" height="13" rx="5" fill="rgba(90,90,90,0.05)"/></svg>
<div class="wm" style="left:696px;top:637.8px;font-weight:bold;font-size:31.5px;line-height:31.5px;color:rgba(110,110,110,0.055);letter-spacing:0.2px">ABSKOOP.COM</div>
<div class="wm" style="left:735px;top:586.8px;font-weight:bold;font-size:46px;line-height:46px;letter-spacing:2.5px;color:rgba(90,130,160,0.06)">ahhhh<span style="color:rgba(210,70,70,0.06)">fs</span></div>
<svg class="wm" style="left:702px;top:588.8px" width="26" height="45" viewBox="0 0 26 45"><circle cx="13" cy="4" r="3.5" fill="rgba(90,90,90,0.06)"/><ellipse cx="13" cy="15" rx="11" ry="10" fill="rgba(90,90,90,0.06)"/><ellipse cx="13" cy="27" rx="9" ry="5" fill="rgba(210,70,70,0.06)"/><rect x="4" y="31" width="18" height="13" rx="5" fill="rgba(90,90,90,0.05)"/></svg>
<div class="wm" style="left:1027px;top:637.8px;font-weight:bold;font-size:31.5px;line-height:31.5px;color:rgba(110,110,110,0.055);letter-spacing:0.2px">ABSKOOP.COM</div>
<div class="wm" style="left:1066px;top:586.8px;font-weight:bold;font-size:46px;line-height:46px;letter-spacing:2.5px;color:rgba(90,130,160,0.06)">ahhhh<span style="color:rgba(210,70,70,0.06)">fs</span></div>
<svg class="wm" style="left:1033px;top:588.8px" width="26" height="45" viewBox="0 0 26 45"><circle cx="13" cy="4" r="3.5" fill="rgba(90,90,90,0.06)"/><ellipse cx="13" cy="15" rx="11" ry="10" fill="rgba(90,90,90,0.06)"/><ellipse cx="13" cy="27" rx="9" ry="5" fill="rgba(210,70,70,0.06)"/><rect x="4" y="31" width="18" height="13" rx="5" fill="rgba(90,90,90,0.05)"/></svg>
<div class="wm" style="left:1358px;top:637.8px;font-weight:bold;font-size:31.5px;line-height:31.5px;color:rgba(110,110,110,0.055);letter-spacing:0.2px">ABSKOOP.COM</div>
<div class="wm" style="left:1397px;top:586.8px;font-weight:bold;font-size:46px;line-height:46px;letter-spacing:2.5px;color:rgba(90,130,160,0.06)">ahhhh<span style="color:rgba(210,70,70,0.06)">fs</span></div>
<svg class="wm" style="left:1364px;top:588.8px" width="26" height="45" viewBox="0 0 26 45"><circle cx="13" cy="4" r="3.5" fill="rgba(90,90,90,0.06)"/><ellipse cx="13" cy="15" rx="11" ry="10" fill="rgba(90,90,90,0.06)"/><ellipse cx="13" cy="27" rx="9" ry="5" fill="rgba(210,70,70,0.06)"/><rect x="4" y="31" width="18" height="13" rx="5" fill="rgba(90,90,90,0.05)"/></svg>
<div class="wm" style="left:1689px;top:637.8px;font-weight:bold;font-size:31.5px;line-height:31.5px;color:rgba(110,110,110,0.055);letter-spacing:0.2px">ABSKOOP.COM</div>
<div class="wm" style="left:1728px;top:586.8px;font-weight:bold;font-size:46px;line-height:46px;letter-spacing:2.5px;color:rgba(90,130,160,0.06)">ahhhh<span style="color:rgba(210,70,70,0.06)">fs</span></div>
<svg class="wm" style="left:1695px;top:588.8px" width="26" height="45" viewBox="0 0 26 45"><circle cx="13" cy="4" r="3.5" fill="rgba(90,90,90,0.06)"/><ellipse cx="13" cy="15" rx="11" ry="10" fill="rgba(90,90,90,0.06)"/><ellipse cx="13" cy="27" rx="9" ry="5" fill="rgba(210,70,70,0.06)"/><rect x="4" y="31" width="18" height="13" rx="5" fill="rgba(90,90,90,0.05)"/></svg>
<div class="wm" style="left:-297px;top:818.8px;font-weight:bold;font-size:31.5px;line-height:31.5px;color:rgba(110,110,110,0.055);letter-spacing:0.2px">ABSKOOP.COM</div>
<div class="wm" style="left:-258px;top:767.8px;font-weight:bold;font-size:46px;line-height:46px;letter-spacing:2.5px;color:rgba(90,130,160,0.06)">ahhhh<span style="color:rgba(210,70,70,0.06)">fs</span></div>
<svg class="wm" style="left:-291px;top:769.8px" width="26" height="45" viewBox="0 0 26 45"><circle cx="13" cy="4" r="3.5" fill="rgba(90,90,90,0.06)"/><ellipse cx="13" cy="15" rx="11" ry="10" fill="rgba(90,90,90,0.06)"/><ellipse cx="13" cy="27" rx="9" ry="5" fill="rgba(210,70,70,0.06)"/><rect x="4" y="31" width="18" height="13" rx="5" fill="rgba(90,90,90,0.05)"/></svg>
<div class="wm" style="left:34px;top:818.8px;font-weight:bold;font-size:31.5px;line-height:31.5px;color:rgba(110,110,110,0.055);letter-spacing:0.2px">ABSKOOP.COM</div>
<div class="wm" style="left:73px;top:767.8px;font-weight:bold;font-size:46px;line-height:46px;letter-spacing:2.5px;color:rgba(90,130,160,0.06)">ahhhh<span style="color:rgba(210,70,70,0.06)">fs</span></div>
<svg class="wm" style="left:40px;top:769.8px" width="26" height="45" viewBox="0 0 26 45"><circle cx="13" cy="4" r="3.5" fill="rgba(90,90,90,0.06)"/><ellipse cx="13" cy="15" rx="11" ry="10" fill="rgba(90,90,90,0.06)"/><ellipse cx="13" cy="27" rx="9" ry="5" fill="rgba(210,70,70,0.06)"/><rect x="4" y="31" width="18" height="13" rx="5" fill="rgba(90,90,90,0.05)"/></svg>
<div class="wm" style="left:365px;top:818.8px;font-weight:bold;font-size:31.5px;line-height:31.5px;color:rgba(110,110,110,0.055);letter-spacing:0.2px">ABSKOOP.COM</div>
<div class="wm" style="left:404px;top:767.8px;font-weight:bold;font-size:46px;line-height:46px;letter-spacing:2.5px;color:rgba(90,130,160,0.06)">ahhhh<span style="color:rgba(210,70,70,0.06)">fs</span></div>
<svg class="wm" style="left:371px;top:769.8px" width="26" height="45" viewBox="0 0 26 45"><circle cx="13" cy="4" r="3.5" fill="rgba(90,90,90,0.06)"/><ellipse cx="13" cy="15" rx="11" ry="10" fill="rgba(90,90,90,0.06)"/><ellipse cx="13" cy="27" rx="9" ry="5" fill="rgba(210,70,70,0.06)"/><rect x="4" y="31" width="18" height="13" rx="5" fill="rgba(90,90,90,0.05)"/></svg>
<div class="wm" style="left:696px;top:818.8px;font-weight:bold;font-size:31.5px;line-height:31.5px;color:rgba(110,110,110,0.055);letter-spacing:0.2px">ABSKOOP.COM</div>
<div class="wm" style="left:735px;top:767.8px;font-weight:bold;font-size:46px;line-height:46px;letter-spacing:2.5px;color:rgba(90,130,160,0.06)">ahhhh<span style="color:rgba(210,70,70,0.06)">fs</span></div>
<svg class="wm" style="left:702px;top:769.8px" width="26" height="45" viewBox="0 0 26 45"><circle cx="13" cy="4" r="3.5" fill="rgba(90,90,90,0.06)"/><ellipse cx="13" cy="15" rx="11" ry="10" fill="rgba(90,90,90,0.06)"/><ellipse cx="13" cy="27" rx="9" ry="5" fill="rgba(210,70,70,0.06)"/><rect x="4" y="31" width="18" height="13" rx="5" fill="rgba(90,90,90,0.05)"/></svg>
<div class="wm" style="left:1027px;top:818.8px;font-weight:bold;font-size:31.5px;line-height:31.5px;color:rgba(110,110,110,0.055);letter-spacing:0.2px">ABSKOOP.COM</div>
<div class="wm" style="left:1066px;top:767.8px;font-weight:bold;font-size:46px;line-height:46px;letter-spacing:2.5px;color:rgba(90,130,160,0.06)">ahhhh<span style="color:rgba(210,70,70,0.06)">fs</span></div>
<svg class="wm" style="left:1033px;top:769.8px" width="26" height="45" viewBox="0 0 26 45"><circle cx="13" cy="4" r="3.5" fill="rgba(90,90,90,0.06)"/><ellipse cx="13" cy="15" rx="11" ry="10" fill="rgba(90,90,90,0.06)"/><ellipse cx="13" cy="27" rx="9" ry="5" fill="rgba(210,70,70,0.06)"/><rect x="4" y="31" width="18" height="13" rx="5" fill="rgba(90,90,90,0.05)"/></svg>
<div class="wm" style="left:1358px;top:818.8px;font-weight:bold;font-size:31.5px;line-height:31.5px;color:rgba(110,110,110,0.055);letter-spacing:0.2px">ABSKOOP.COM</div>
<div class="wm" style="left:1397px;top:767.8px;font-weight:bold;font-size:46px;line-height:46px;letter-spacing:2.5px;color:rgba(90,130,160,0.06)">ahhhh<span style="color:rgba(210,70,70,0.06)">fs</span></div>
<svg class="wm" style="left:1364px;top:769.8px" width="26" height="45" viewBox="0 0 26 45"><circle cx="13" cy="4" r="3.5" fill="rgba(90,90,90,0.06)"/><ellipse cx="13" cy="15" rx="11" ry="10" fill="rgba(90,90,90,0.06)"/><ellipse cx="13" cy="27" rx="9" ry="5" fill="rgba(210,70,70,0.06)"/><rect x="4" y="31" width="18" height="13" rx="5" fill="rgba(90,90,90,0.05)"/></svg>
<div class="wm" style="left:1689px;top:818.8px;font-weight:bold;font-size:31.5px;line-height:31.5px;color:rgba(110,110,110,0.055);letter-spacing:0.2px">ABSKOOP.COM</div>
<div class="wm" style="left:1728px;top:767.8px;font-weight:bold;font-size:46px;line-height:46px;letter-spacing:2.5px;color:rgba(90,130,160,0.06)">ahhhh<span style="color:rgba(210,70,70,0.06)">fs</span></div>
<svg class="wm" style="left:1695px;top:769.8px" width="26" height="45" viewBox="0 0 26 45"><circle cx="13" cy="4" r="3.5" fill="rgba(90,90,90,0.06)"/><ellipse cx="13" cy="15" rx="11" ry="10" fill="rgba(90,90,90,0.06)"/><ellipse cx="13" cy="27" rx="9" ry="5" fill="rgba(210,70,70,0.06)"/><rect x="4" y="31" width="18" height="13" rx="5" fill="rgba(90,90,90,0.05)"/></svg>
<div class="wm" style="left:-297px;top:999.8px;font-weight:bold;font-size:31.5px;line-height:31.5px;color:rgba(110,110,110,0.055);letter-spacing:0.2px">ABSKOOP.COM</div>
<div class="wm" style="left:-258px;top:948.8px;font-weight:bold;font-size:46px;line-height:46px;letter-spacing:2.5px;color:rgba(90,130,160,0.06)">ahhhh<span style="color:rgba(210,70,70,0.06)">fs</span></div>
<svg class="wm" style="left:-291px;top:950.8px" width="26" height="45" viewBox="0 0 26 45"><circle cx="13" cy="4" r="3.5" fill="rgba(90,90,90,0.06)"/><ellipse cx="13" cy="15" rx="11" ry="10" fill="rgba(90,90,90,0.06)"/><ellipse cx="13" cy="27" rx="9" ry="5" fill="rgba(210,70,70,0.06)"/><rect x="4" y="31" width="18" height="13" rx="5" fill="rgba(90,90,90,0.05)"/></svg>
<div class="wm" style="left:34px;top:999.8px;font-weight:bold;font-size:31.5px;line-height:31.5px;color:rgba(110,110,110,0.055);letter-spacing:0.2px">ABSKOOP.COM</div>
<div class="wm" style="left:73px;top:948.8px;font-weight:bold;font-size:46px;line-height:46px;letter-spacing:2.5px;color:rgba(90,130,160,0.06)">ahhhh<span style="color:rgba(210,70,70,0.06)">fs</span></div>
<svg class="wm" style="left:40px;top:950.8px" width="26" height="45" viewBox="0 0 26 45"><circle cx="13" cy="4" r="3.5" fill="rgba(90,90,90,0.06)"/><ellipse cx="13" cy="15" rx="11" ry="10" fill="rgba(90,90,90,0.06)"/><ellipse cx="13" cy="27" rx="9" ry="5" fill="rgba(210,70,70,0.06)"/><rect x="4" y="31" width="18" height="13" rx="5" fill="rgba(90,90,90,0.05)"/></svg>
<div class="wm" style="left:365px;top:999.8px;font-weight:bold;font-size:31.5px;line-height:31.5px;color:rgba(110,110,110,0.055);letter-spacing:0.2px">ABSKOOP.COM</div>
<div class="wm" style="left:404px;top:948.8px;font-weight:bold;font-size:46px;line-height:46px;letter-spacing:2.5px;color:rgba(90,130,160,0.06)">ahhhh<span style="color:rgba(210,70,70,0.06)">fs</span></div>
<svg class="wm" style="left:371px;top:950.8px" width="26" height="45" viewBox="0 0 26 45"><circle cx="13" cy="4" r="3.5" fill="rgba(90,90,90,0.06)"/><ellipse cx="13" cy="15" rx="11" ry="10" fill="rgba(90,90,90,0.06)"/><ellipse cx="13" cy="27" rx="9" ry="5" fill="rgba(210,70,70,0.06)"/><rect x="4" y="31" width="18" height="13" rx="5" fill="rgba(90,90,90,0.05)"/></svg>
<div class="wm" style="left:696px;top:999.8px;font-weight:bold;font-size:31.5px;line-height:31.5px;color:rgba(110,110,110,0.055);letter-spacing:0.2px">ABSKOOP.COM</div>
<div class="wm" style="left:735px;top:948.8px;font-weight:bold;font-size:46px;line-height:46px;letter-spacing:2.5px;color:rgba(90,130,160,0.06)">ahhhh<span style="color:rgba(210,70,70,0.06)">fs</span></div>
<svg class="wm" style="left:702px;top:950.8px" width="26" height="45" viewBox="0 0 26 45"><circle cx="13" cy="4" r="3.5" fill="rgba(90,90,90,0.06)"/><ellipse cx="13" cy="15" rx="11" ry="10" fill="rgba(90,90,90,0.06)"/><ellipse cx="13" cy="27" rx="9" ry="5" fill="rgba(210,70,70,0.06)"/><rect x="4" y="31" width="18" height="13" rx="5" fill="rgba(90,90,90,0.05)"/></svg>
<div class="wm" style="left:1027px;top:999.8px;font-weight:bold;font-size:31.5px;line-height:31.5px;color:rgba(110,110,110,0.055);letter-spacing:0.2px">ABSKOOP.COM</div>
<div class="wm" style="left:1066px;top:948.8px;font-weight:bold;font-size:46px;line-height:46px;letter-spacing:2.5px;color:rgba(90,130,160,0.06)">ahhhh<span style="color:rgba(210,70,70,0.06)">fs</span></div>
<svg class="wm" style="left:1033px;top:950.8px" width="26" height="45" viewBox="0 0 26 45"><circle cx="13" cy="4" r="3.5" fill="rgba(90,90,90,0.06)"/><ellipse cx="13" cy="15" rx="11" ry="10" fill="rgba(90,90,90,0.06)"/><ellipse cx="13" cy="27" rx="9" ry="5" fill="rgba(210,70,70,0.06)"/><rect x="4" y="31" width="18" height="13" rx="5" fill="rgba(90,90,90,0.05)"/></svg>
<div class="wm" style="left:1358px;top:999.8px;font-weight:bold;font-size:31.5px;line-height:31.5px;color:rgba(110,110,110,0.055);letter-spacing:0.2px">ABSKOOP.COM</div>
<div class="wm" style="left:1397px;top:948.8px;font-weight:bold;font-size:46px;line-height:46px;letter-spacing:2.5px;color:rgba(90,130,160,0.06)">ahhhh<span style="color:rgba(210,70,70,0.06)">fs</span></div>
<svg class="wm" style="left:1364px;top:950.8px" width="26" height="45" viewBox="0 0 26 45"><circle cx="13" cy="4" r="3.5" fill="rgba(90,90,90,0.06)"/><ellipse cx="13" cy="15" rx="11" ry="10" fill="rgba(90,90,90,0.06)"/><ellipse cx="13" cy="27" rx="9" ry="5" fill="rgba(210,70,70,0.06)"/><rect x="4" y="31" width="18" height="13" rx="5" fill="rgba(90,90,90,0.05)"/></svg>
<div class="wm" style="left:1689px;top:999.8px;font-weight:bold;font-size:31.5px;line-height:31.5px;color:rgba(110,110,110,0.055);letter-spacing:0.2px">ABSKOOP.COM</div>
<div class="wm" style="left:1728px;top:948.8px;font-weight:bold;font-size:46px;line-height:46px;letter-spacing:2.5px;color:rgba(90,130,160,0.06)">ahhhh<span style="color:rgba(210,70,70,0.06)">fs</span></div>
<svg class="wm" style="left:1695px;top:950.8px" width="26" height="45" viewBox="0 0 26 45"><circle cx="13" cy="4" r="3.5" fill="rgba(90,90,90,0.06)"/><ellipse cx="13" cy="15" rx="11" ry="10" fill="rgba(90,90,90,0.06)"/><ellipse cx="13" cy="27" rx="9" ry="5" fill="rgba(210,70,70,0.06)"/><rect x="4" y="31" width="18" height="13" rx="5" fill="rgba(90,90,90,0.05)"/></svg>
<div class="wm" style="left:-297px;top:1180.8px;font-weight:bold;font-size:31.5px;line-height:31.5px;color:rgba(110,110,110,0.055);letter-spacing:0.2px">ABSKOOP.COM</div>
<div class="wm" style="left:-258px;top:1129.8px;font-weight:bold;font-size:46px;line-height:46px;letter-spacing:2.5px;color:rgba(90,130,160,0.06)">ahhhh<span style="color:rgba(210,70,70,0.06)">fs</span></div>
<svg class="wm" style="left:-291px;top:1131.8px" width="26" height="45" viewBox="0 0 26 45"><circle cx="13" cy="4" r="3.5" fill="rgba(90,90,90,0.06)"/><ellipse cx="13" cy="15" rx="11" ry="10" fill="rgba(90,90,90,0.06)"/><ellipse cx="13" cy="27" rx="9" ry="5" fill="rgba(210,70,70,0.06)"/><rect x="4" y="31" width="18" height="13" rx="5" fill="rgba(90,90,90,0.05)"/></svg>
<div class="wm" style="left:34px;top:1180.8px;font-weight:bold;font-size:31.5px;line-height:31.5px;color:rgba(110,110,110,0.055);letter-spacing:0.2px">ABSKOOP.COM</div>
<div class="wm" style="left:73px;top:1129.8px;font-weight:bold;font-size:46px;line-height:46px;letter-spacing:2.5px;color:rgba(90,130,160,0.06)">ahhhh<span style="color:rgba(210,70,70,0.06)">fs</span></div>
<svg class="wm" style="left:40px;top:1131.8px" width="26" height="45" viewBox="0 0 26 45"><circle cx="13" cy="4" r="3.5" fill="rgba(90,90,90,0.06)"/><ellipse cx="13" cy="15" rx="11" ry="10" fill="rgba(90,90,90,0.06)"/><ellipse cx="13" cy="27" rx="9" ry="5" fill="rgba(210,70,70,0.06)"/><rect x="4" y="31" width="18" height="13" rx="5" fill="rgba(90,90,90,0.05)"/></svg>
<div class="wm" style="left:365px;top:1180.8px;font-weight:bold;font-size:31.5px;line-height:31.5px;color:rgba(110,110,110,0.055);letter-spacing:0.2px">ABSKOOP.COM</div>
<div class="wm" style="left:404px;top:1129.8px;font-weight:bold;font-size:46px;line-height:46px;letter-spacing:2.5px;color:rgba(90,130,160,0.06)">ahhhh<span style="color:rgba(210,70,70,0.06)">fs</span></div>
<svg class="wm" style="left:371px;top:1131.8px" width="26" height="45" viewBox="0 0 26 45"><circle cx="13" cy="4" r="3.5" fill="rgba(90,90,90,0.06)"/><ellipse cx="13" cy="15" rx="11" ry="10" fill="rgba(90,90,90,0.06)"/><ellipse cx="13" cy="27" rx="9" ry="5" fill="rgba(210,70,70,0.06)"/><rect x="4" y="31" width="18" height="13" rx="5" fill="rgba(90,90,90,0.05)"/></svg>
<div class="wm" style="left:696px;top:1180.8px;font-weight:bold;font-size:31.5px;line-height:31.5px;color:rgba(110,110,110,0.055);letter-spacing:0.2px">ABSKOOP.COM</div>
<div class="wm" style="left:735px;top:1129.8px;font-weight:bold;font-size:46px;line-height:46px;letter-spacing:2.5px;color:rgba(90,130,160,0.06)">ahhhh<span style="color:rgba(210,70,70,0.06)">fs</span></div>
<svg class="wm" style="left:702px;top:1131.8px" width="26" height="45" viewBox="0 0 26 45"><circle cx="13" cy="4" r="3.5" fill="rgba(90,90,90,0.06)"/><ellipse cx="13" cy="15" rx="11" ry="10" fill="rgba(90,90,90,0.06)"/><ellipse cx="13" cy="27" rx="9" ry="5" fill="rgba(210,70,70,0.06)"/><rect x="4" y="31" width="18" height="13" rx="5" fill="rgba(90,90,90,0.05)"/></svg>
<div class="wm" style="left:1027px;top:1180.8px;font-weight:bold;font-size:31.5px;line-height:31.5px;color:rgba(110,110,110,0.055);letter-spacing:0.2px">ABSKOOP.COM</div>
<div class="wm" style="left:1066px;top:1129.8px;font-weight:bold;font-size:46px;line-height:46px;letter-spacing:2.5px;color:rgba(90,130,160,0.06)">ahhhh<span style="color:rgba(210,70,70,0.06)">fs</span></div>
<svg class="wm" style="left:1033px;top:1131.8px" width="26" height="45" viewBox="0 0 26 45"><circle cx="13" cy="4" r="3.5" fill="rgba(90,90,90,0.06)"/><ellipse cx="13" cy="15" rx="11" ry="10" fill="rgba(90,90,90,0.06)"/><ellipse cx="13" cy="27" rx="9" ry="5" fill="rgba(210,70,70,0.06)"/><rect x="4" y="31" width="18" height="13" rx="5" fill="rgba(90,90,90,0.05)"/></svg>
<div class="wm" style="left:1358px;top:1180.8px;font-weight:bold;font-size:31.5px;line-height:31.5px;color:rgba(110,110,110,0.055);letter-spacing:0.2px">ABSKOOP.COM</div>
<div class="wm" style="left:1397px;top:1129.8px;font-weight:bold;font-size:46px;line-height:46px;letter-spacing:2.5px;color:rgba(90,130,160,0.06)">ahhhh<span style="color:rgba(210,70,70,0.06)">fs</span></div>
<svg class="wm" style="left:1364px;top:1131.8px" width="26" height="45" viewBox="0 0 26 45"><circle cx="13" cy="4" r="3.5" fill="rgba(90,90,90,0.06)"/><ellipse cx="13" cy="15" rx="11" ry="10" fill="rgba(90,90,90,0.06)"/><ellipse cx="13" cy="27" rx="9" ry="5" fill="rgba(210,70,70,0.06)"/><rect x="4" y="31" width="18" height="13" rx="5" fill="rgba(90,90,90,0.05)"/></svg>
<div class="wm" style="left:1689px;top:1180.8px;font-weight:bold;font-size:31.5px;line-height:31.5px;color:rgba(110,110,110,0.055);letter-spacing:0.2px">ABSKOOP.COM</div>
<div class="wm" style="left:1728px;top:1129.8px;font-weight:bold;font-size:46px;line-height:46px;letter-spacing:2.5px;color:rgba(90,130,160,0.06)">ahhhh<span style="color:rgba(210,70,70,0.06)">fs</span></div>
<svg class="wm" style="left:1695px;top:1131.8px" width="26" height="45" viewBox="0 0 26 45"><circle cx="13" cy="4" r="3.5" fill="rgba(90,90,90,0.06)"/><ellipse cx="13" cy="15" rx="11" ry="10" fill="rgba(90,90,90,0.06)"/><ellipse cx="13" cy="27" rx="9" ry="5" fill="rgba(210,70,70,0.06)"/><rect x="4" y="31" width="18" height="13" rx="5" fill="rgba(90,90,90,0.05)"/></svg>
</div>
</body></html>
